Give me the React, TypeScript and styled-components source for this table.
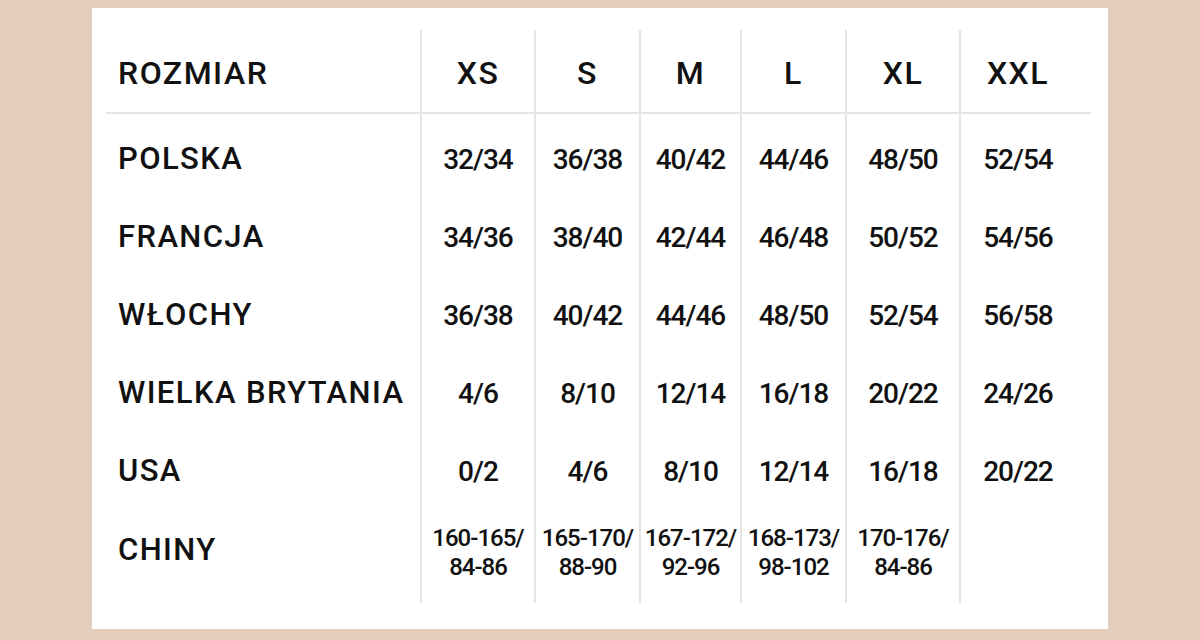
import React from 'react';
import styled, {createGlobalStyle} from "styled-components";

const GlobalStyle = createGlobalStyle`
  html, body {
    margin: 0;
    padding: 0;
    background: #e3cebe;
  }

  body {
    padding-top: 8px;
    font-family: 'Roboto', 'Liberation Sans', sans-serif;
    color: #111;
  }
`

const sizes = ['XS', 'S', 'M', 'L', 'XL', 'XXL']

const rows: { country: string, values: string[] }[] = [
    {country: 'POLSKA', values: ['32/34', '36/38', '40/42', '44/46', '48/50', '52/54']},
    {country: 'FRANCJA', values: ['34/36', '38/40', '42/44', '46/48', '50/52', '54/56']},
    {country: 'WŁOCHY', values: ['36/38', '40/42', '44/46', '48/50', '52/54', '56/58']},
    {country: 'WIELKA BRYTANIA', values: ['4/6', '8/10', '12/14', '16/18', '20/22', '24/26']},
    {country: 'USA', values: ['0/2', '4/6', '8/10', '12/14', '16/18', '20/22']},
    {country: 'CHINY', values: ['160-165/\n84-86', '165-170/\n88-90', '167-172/\n92-96', '168-173/\n98-102', '170-176/\n84-86', '']},
]

export default function App() {
    return (
        <>
            <GlobalStyle/>
            <StyledCard>
                <StyledTable>
                    <HeadCell first>ROZMIAR</HeadCell>
                    {sizes.map((s, i) => (
                        <HeadCell key={s} divider={i < 5} last={i === 5}>{s}</HeadCell>
                    ))}
                    {rows.map((row, r) => (
                        <React.Fragment key={row.country}>
                            <LabelCell row={r}>{row.country}</LabelCell>
                            {row.values.map((v, i) => (
                                <ValueCell key={i} row={r} divider={i < 5} last={i === 5} small={r === 5}>
                                    {v}
                                </ValueCell>
                            ))}
                        </React.Fragment>
                    ))}
                </StyledTable>
            </StyledCard>
        </>
    );
}

const StyledCard = styled.section`
  width: 1016px;
  margin: 0 auto;
  background: #fff;
  padding: 22px 17px 26px 14px;
  box-sizing: border-box;
`

const StyledTable = styled.div`
  display: grid;
  grid-template-columns: 316px 114px 105px 101px 105px 114px 130px;
  grid-template-rows: 84px 83px repeat(4, 78px) 94px;
`

const Cell = styled.div<{ divider?: boolean, last?: boolean, first?: boolean }>`
  display: flex;
  align-items: center;
  justify-content: ${p => p.first ? 'flex-start' : 'center'};
  box-sizing: border-box;
  border-right: ${p => p.first || p.divider ? '2px solid #e4e4e4' : 'none'};
  padding-right: ${p => p.last ? '16px' : '0'};
`

const HeadCell = styled(Cell)`
  font-size: 32px;
  font-weight: 500;
  letter-spacing: 1.5px;
  padding-top: 4px;
  padding-left: ${p => p.first ? '12px' : '0'};
  border-bottom: 2px solid #e4e4e4;
`

const rowPadding = (row: number) => row === 0 ? 'padding-top: 5px;' : row === 5 ? 'padding-bottom: 14px;' : ''

const LabelCell = styled(Cell).attrs({first: true})<{ row: number }>`
  font-size: 31px;
  font-weight: 500;
  letter-spacing: 1.4px;
  padding-left: 12px;
  white-space: nowrap;
  ${p => rowPadding(p.row)}
`

const ValueCell = styled(Cell)<{ row: number, small?: boolean }>`
  font-size: ${p => p.small ? '24px' : '28px'};
  line-height: ${p => p.small ? '29px' : '32px'};
  font-weight: 500;
  letter-spacing: -1px;
  text-align: center;
  white-space: pre-line;
  padding-top: ${p => p.row === 0 ? '9px' : p.row === 5 ? '0' : '4px'};
  padding-bottom: ${p => p.row === 5 ? '6px' : '0'};
`
